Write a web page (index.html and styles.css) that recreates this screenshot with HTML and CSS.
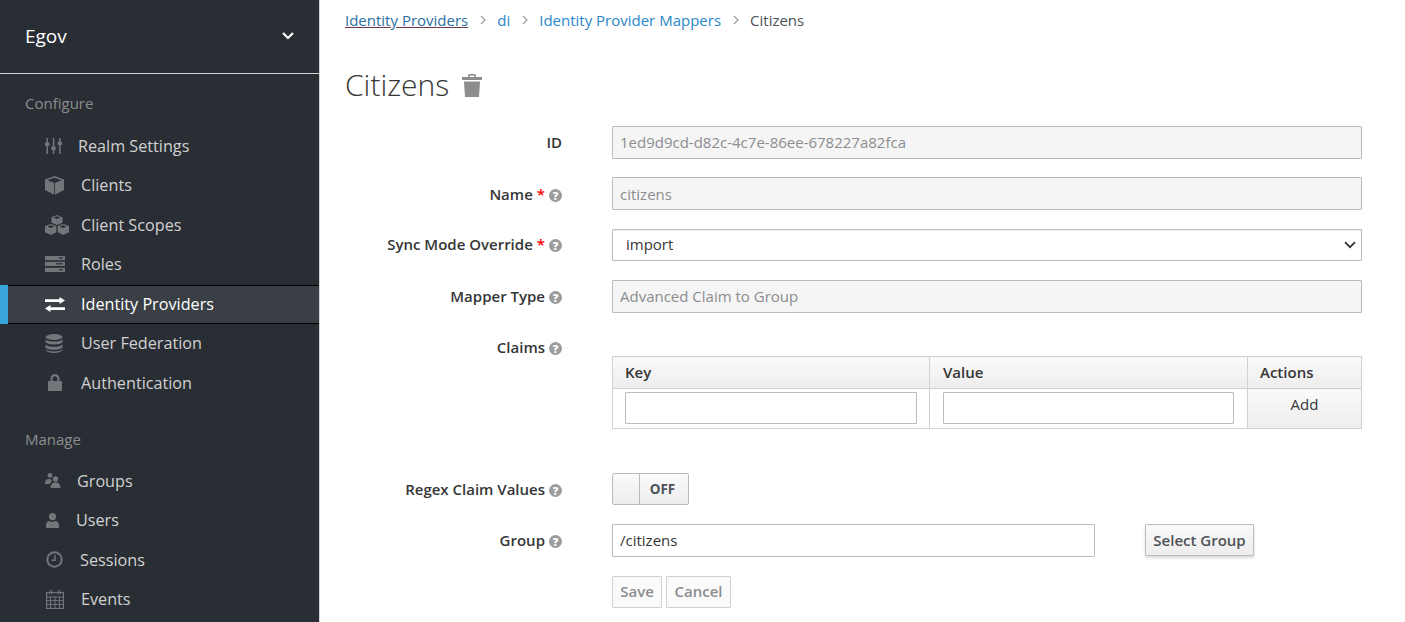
FILE: index.html
```html
<!DOCTYPE html>
<html lang="en">
<head>
<meta charset="utf-8">
<title>Citizens</title>
<link rel="stylesheet" href="styles.css">
</head>
<body>
<div class="app">
  <aside class="sidebar">
    <div class="realm">
      <span>Egov</span>
      <svg class="realm-chev" width="14" height="10" viewBox="0 0 14 10"><path d="M2 2l5 5 5-5" fill="none" stroke="#fff" stroke-width="2.2"/></svg>
    </div>
    <h2 class="nav-title first">Configure</h2>
    <ul class="nav">
      <li><a class="nav-item"><span class="ico w33"><svg width="17" height="16" viewBox="0 0 17 16"><g fill="#72767b"><rect x="1.500" y="0" width="1.500" height="16"/><rect x="7.800" y="0" width="1.500" height="16"/><rect x="14.100" y="0" width="1.500" height="16"/><rect x="0" y="4.500" width="4.500" height="3.500" rx="1"/><rect x="6.300" y="8.500" width="4.500" height="3.500" rx="1"/><rect x="12.500" y="3.500" width="4.500" height="3.500" rx="1"/></g></svg></span>Realm Settings</a></li>
      <li><a class="nav-item"><span class="ico w36"><svg width="19" height="19" viewBox="0 0 19 19"><path fill="#72767b" d="M9.500 0L19 3.500v10.500L9.500 19 0 14V3.500z"/><path fill="#292e34" d="M9.500 1.700L16.600 4.300 9.500 7 2.400 4.300z"/><path stroke="#292e34" stroke-width=".8" d="M9.500 7v12"/></svg></span>Clients</a></li>
      <li><a class="nav-item"><span class="ico w36"><svg width="24" height="20" viewBox="0 0 24 20"><path fill="#72767b" d="M12 0l5.500 2.200v5.600L12 10 6.500 7.800V2.200zM6 9l5.300 2.100v6.200L6 20l-6-2.700v-6.200zM18 9l6 2.100v6.200L18 20l-5.300-2.700v-6.200z"/><path fill="#292e34" d="M12 1.200l3.600 1.400L12 4 8.400 2.600zM6 10.200l3.600 1.400L6 13l-3.600-1.400zM18 10.200l3.600 1.400L18 13l-3.600-1.400z"/></svg></span>Client Scopes</a></li>
      <li><a class="nav-item"><span class="ico w36"><svg width="20" height="16" viewBox="0 0 20 16"><g fill="#72767b"><rect width="20" height="4.200"/><rect y="5.800" width="20" height="4.200"/><rect y="11.800" width="20" height="4.200"/></g><g fill="#292e34"><rect x="14" y="1.400" width="4" height="1.200"/><rect x="11" y="7.200" width="7" height="1.200"/><rect x="14" y="13.200" width="4" height="1.200"/></g></svg></span>Roles</a></li>
      <li class="active"><a class="nav-item"><span class="ico w36"><svg width="20" height="15" viewBox="0 0 20 15"><path fill="#fff" d="M14.500 0L20 3.500 14.500 7V5H0V2.200h14.500zM5.500 8v2.200H20V13H5.500v2L0 11.500z"/></svg></span>Identity Providers</a></li>
      <li><a class="nav-item"><span class="ico w36"><svg width="18" height="19" viewBox="0 0 18 19"><g fill="#72767b"><ellipse cx="9" cy="3" rx="8.500" ry="3"/><path d="M.5 5.200C2 7 5 7.600 9 7.600s7-.6 8.500-2.400V8c-1 1.700-4.500 2.500-8.500 2.500S1.500 9.700.5 8zM.5 10.400C2 12.100 5 12.700 9 12.700s7-.6 8.500-2.300v3c-1 1.700-4.500 2.400-8.500 2.400s-7.500-.7-8.500-2.400zM.5 15.200C2 17 5 17.400 9 17.400s7-.4 8.500-2.200V16c-1 2-4.500 3-8.500 3S1.500 18 .5 16z"/></g></svg></span>User Federation</a></li>
      <li><a class="nav-item"><span class="ico w36"><svg class="ico-in" width="14" height="17" viewBox="0 0 14 17"><path fill="#72767b" d="M2.500 7V4.800C2.500 2 4.500 0 7 0s4.500 2 4.500 4.800V7H13c.6 0 1 .4 1 1v8c0 .6-.4 1-1 1H1c-.6 0-1-.4-1-1V8c0-.6.4-1 1-1zM4.700 7h4.600V4.800C9.300 3.300 8.300 2.300 7 2.300S4.700 3.300 4.700 4.800z"/></svg></span>Authentication</a></li>
    </ul>
    <h2 class="nav-title">Manage</h2>
    <ul class="nav">
      <li><a class="nav-item"><span class="ico w32"><svg width="16" height="15" viewBox="0 0 16 15"><g fill="#72767b"><circle cx="5" cy="2.400" r="2.400"/><circle cx="10.500" cy="6" r="2.700"/><path d="M0 10c0-2.500 1.500-4 3.500-4H5.500c.4 1 1 1.800 1.700 2.300C6 9 5 10 4.800 11H0zM5.500 15c0-3 1.500-5.800 5-5.800s5 2.800 5 5.800z"/></g></svg></span>Groups</a></li>
      <li><a class="nav-item"><span class="ico w31"><svg class="ico-in1" width="13" height="15" viewBox="0 0 13 15"><g fill="#72767b"><circle cx="6.500" cy="3.600" r="3.600"/><path d="M0 15v-3c0-2.500 2-4 3.500-4 1 .7 2 1 3 1s2-.3 3-1c1.500 0 3.500 1.500 3.500 4v3z"/></g></svg></span>Users</a></li>
      <li><a class="nav-item"><span class="ico w35"><svg class="ico-in1" width="17" height="17" viewBox="0 0 17 17"><circle cx="8.500" cy="8.500" r="7.200" fill="none" stroke="#72767b" stroke-width="2"/><path d="M9 4v5.200H5.500" fill="none" stroke="#72767b" stroke-width="1.400"/></svg></span>Sessions</a></li>
      <li><a class="nav-item"><span class="ico w36"><svg class="ico-in1" width="18" height="19" viewBox="0 0 18 19"><g fill="none" stroke="#72767b"><rect x=".6" y="2.500" width="16.800" height="16" stroke-width="1.200"/><path d="M.5 7h17M.5 10.700h17M.5 14.400h17M4.500 7v11.500M9 7v11.500M13.500 7v11.500"/><path d="M3.800 4.500V1.500a1 1 0 0 1 2 0v3M12.200 4.500V1.500a1 1 0 0 1 2 0v3"/></g></svg></span>Events</a></li>
    </ul>
  </aside>
  <main class="content">
    <nav class="crumbs">
      <a class="crumb-first">Identity Providers</a>
      <svg class="sep" width="6" height="10" viewBox="0 0 6 10"><path d="M1 1l4 4-4 4" fill="none" stroke="#9c9c9c" stroke-width="1.200"/></svg>
      <a>di</a>
      <svg class="sep" width="6" height="10" viewBox="0 0 6 10"><path d="M1 1l4 4-4 4" fill="none" stroke="#9c9c9c" stroke-width="1.200"/></svg>
      <a>Identity Provider Mappers</a>
      <svg class="sep" width="6" height="10" viewBox="0 0 6 10"><path d="M1 1l4 4-4 4" fill="none" stroke="#9c9c9c" stroke-width="1.200"/></svg>
      <span class="crumb-cur">Citizens</span>
    </nav>
    <h1 class="title">Citizens
      <svg class="trash" width="20" height="23" viewBox="0 0 21 23" preserveAspectRatio="none"><path fill="#8b8d8f" d="M6.500 3V1c0-.6.400-1 1-1h6c.6 0 1 .4 1 1v2H21v3H0V3zM8.200 3h4.600V1.600H8.200zM2 7.500h17L17.800 23H3.200z"/></svg>
    </h1>
    <form class="form">
      <div class="row">
        <label class="lbl">ID</label>
        <input class="ctl" disabled value="1ed9d9cd-d82c-4c7e-86ee-678227a82fca">
      </div>
      <div class="row row-name">
        <label class="lbl">Name <span class="req">*</span> <i class="help">?</i></label>
        <input class="ctl" disabled value="citizens">
      </div>
      <div class="row row-sel">
        <label class="lbl">Sync Mode Override <span class="req">*</span> <i class="help">?</i></label>
        <div class="sel-wrap">
          <select class="ctl sel"><option>import</option></select>
          <svg class="sel-chev" width="12" height="8" viewBox="0 0 12 8"><path d="M1 1.200l5 5 5-5" fill="none" stroke="#363636" stroke-width="1.800"/></svg>
        </div>
      </div>
      <div class="row">
        <label class="lbl">Mapper Type <i class="help">?</i></label>
        <input class="ctl" disabled value="Advanced Claim to Group">
      </div>
      <div class="row row-claims">
        <label class="lbl">Claims <i class="help">?</i></label>
        <table class="claims">
          <thead><tr><th class="c1">Key</th><th class="c2">Value</th><th class="c3">Actions</th></tr></thead>
          <tbody><tr>
            <td class="td-key"><input class="cell-input"></td>
            <td><input class="cell-input"></td>
            <td class="add-cell"><a>Add</a></td>
          </tr></tbody>
        </table>
      </div>
      <div class="row row-toggle">
        <label class="lbl">Regex Claim Values <i class="help">?</i></label>
        <div class="toggle"><span class="knob"></span><span class="off">OFF</span></div>
      </div>
      <div class="row row-group">
        <label class="lbl">Group <i class="help">?</i></label>
        <input class="ctl group-in" value="/citizens">
        <button type="button" class="btn-sel">Select Group</button>
      </div>
      <div class="row actions">
        <button type="button" class="btn-dis btn-save">Save</button>
        <button type="button" class="btn-dis btn-cancel">Cancel</button>
      </div>
    </form>
  </main>
</div>
</body>
</html>
```
FILE: styles.css
```css
* { box-sizing: border-box; }
html, body { margin: 0; height: 100%; overflow: hidden; }
body { font-family: "Open Sans", sans-serif; font-size: 15px; color: #363636; background: #fff; }
.app { display: flex; height: 622px; }

.sidebar { width: 320px; flex: none; background: #292e34; border-right: 1px solid #d1d1d1; color: #d1d1d1; }
.realm { height: 74px; border-bottom: 1px solid #d1d1d1; padding: 0 25px 1px; display: flex; align-items: center; justify-content: space-between; color: #fff; font-size: 19px; }
.realm-chev { margin-right: -1px; }
.nav-title { margin: 26px 0 12.5px 25px; font-size: 15px; line-height: 20px; font-weight: 400; color: #8b8d8f; }
.nav-title.first { margin-top: 19px; margin-bottom: 13px; }
.nav { list-style: none; margin: 0; padding: 0; }
.nav li { height: 39.5px; }
.nav-item { display: flex; align-items: center; height: 100%; padding-left: 45px; font-size: 16.2px; color: #d1d1d1; }
.nav li.active { background: #393f44; background-clip: padding-box; border-top: 1px solid transparent; box-shadow: inset 8px 0 0 #39a5dc, inset 0 1px 0 #030303, inset 0 -1px 0 #030303; }
.nav li.active .nav-item { color: #fff; }
.ico { display: flex; align-items: center; flex: none; }
.ico-in { margin-left: 3px; }
.ico-in1 { margin-left: 1px; }
.w31 { width: 31px; } .w32 { width: 32px; } .w33 { width: 33px; } .w35 { width: 35px; } .w36 { width: 36px; }

.content { flex: 1; padding: 0 43px 0 25px; }
.crumbs { height: 40px; display: flex; align-items: center; color: #4d5258; font-size: 15px; }
.crumbs a { color: #2b87c9; }
.crumbs .crumb-first { color: #2b6f9f; text-decoration: underline; text-decoration-color: #72394a; }
.sep { margin: 0 11.5px; flex: none; }
.crumb-cur { color: #4d5258; }
.title { margin: 0; height: 86px; font-size: 30px; line-height: 48px; font-weight: 300; color: #363636; display: flex; align-items: center; padding-top: 4px; }
.trash { margin-left: 13px; margin-top: 1px; }

.row { display: grid; grid-template-columns: 217px 1fr; column-gap: 50px; align-items: center; margin-bottom: 18px; min-height: 33px; }
.lbl { text-align: right; font-weight: 600; font-size: 15px; color: #363636; display: flex; justify-content: flex-end; align-items: center; gap: 4px; padding-bottom: 2px; }
.req { font-weight: 600; color: #f00; }
.help { width: 13px; height: 13px; border-radius: 50%; background: #9c9c9c; color: #fff; font-style: normal; font-weight: 800; font-size: 11px; line-height: 13px; text-align: center; display: inline-block; margin-top: 3px; }
.ctl { width: 750px; height: 33px; border: 1px solid #bbb; background: #fff; padding: 0 7px 1px; font: 400 15px "Open Sans", sans-serif; color: #363636; border-radius: 1px; }
.ctl:disabled { background: #f5f5f5; color: #8b8d8f; opacity: 1; }
.row-name .lbl, .row-toggle .lbl { padding-bottom: 0; }
.row-name .ctl { padding-bottom: 0; padding-top: 1px; }
.row-sel { margin-bottom: 19px; }
.sel-wrap { position: relative; width: 750px; height: 32px; }
.sel { display: block; height: 32px; padding-left: 13px; appearance: none; box-shadow: inset 0 1px 1px rgba(3,3,3,.08); }
.sel-chev { position: absolute; right: 6px; top: 12px; }
.row-claims { align-items: start; margin-bottom: 44px; }
.row-claims .lbl { height: 33px; }
.claims { width: 750px; border-collapse: collapse; margin-top: 25px; table-layout: fixed; }
.claims th, .claims td { border: 1px solid #d1d1d1; }
.claims th { height: 32px; text-align: left; padding: 0 13px 2px; font-weight: 600; font-size: 15px; color: #363636; background: linear-gradient(#fafafa, #ededed); }
.c1 { width: 317px; } .c2 { width: 318px; }
.claims th.c1, .claims th.c3 { padding-left: 12px; }
.claims td { height: 40px; padding: 3px 13px 4px 13px; }
.claims td.td-key { padding-left: 12px; padding-right: 12px; }
.cell-input { width: 100%; height: 32px; border: 1px solid #bbb; display: block; border-radius: 1px; }
.claims td.add-cell { text-align: center; vertical-align: top; padding: 5px 0 0 0; color: #363636; font-size: 15px; background: linear-gradient(#fafafa, #ededed); }
.row-toggle { margin-bottom: 19px; min-height: 32px; }
.toggle { width: 77px; height: 32px; border: 1px solid #bbb; border-radius: 2px; display: flex; background: linear-gradient(#fafafa, #ededed); }
.knob { width: 27px; border-right: 1px solid #bbb; }
.off { flex: 1; text-align: center; font-weight: 700; font-size: 13.5px; line-height: 31px; color: #4d5258; padding-right: 3px; }
.row-group { grid-template-columns: 217px 483px auto; margin-bottom: 18px; }
.group-in { width: 483px; }
.btn-sel { justify-self: start; align-self: start; height: 32px; width: 109px; border: 1px solid #bbb; border-radius: 1px; background: linear-gradient(#fafafa, #ededed); font: 600 15px "Open Sans", sans-serif; color: #4d5258; box-shadow: 0 2px 3px rgba(3,3,3,.15); padding: 0 0 1px; }
.actions { display: flex; padding-left: 267px; gap: 4px; margin: 0; }
.btn-dis { height: 32px; border: 1px solid #d1d1d1; background: #fafafa; font: 600 15px "Open Sans", sans-serif; color: #8b8d8f; padding: 0 0 2px; border-radius: 1px; }
.btn-save { width: 50px; }
.btn-cancel { width: 65px; }
```
